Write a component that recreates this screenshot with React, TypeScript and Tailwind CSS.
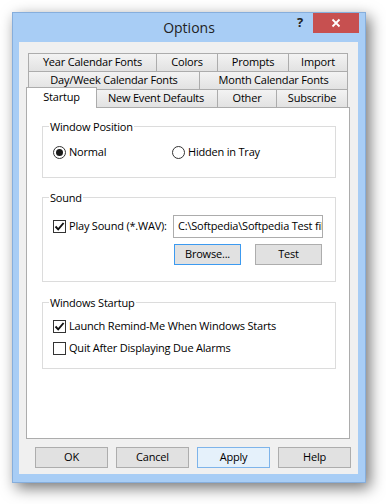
import React from "react";

function Check() {
  return (
    <svg width="11" height="11" viewBox="0 0 11 11">
      <path d="M1.5 5.5 L4.2 8.3 L9.6 2" fill="none" stroke="#111" strokeWidth="1.9" />
    </svg>
  );
}

function CheckBox({ checked }: { checked?: boolean }) {
  return (
    <span className="flex h-[13px] w-[13px] shrink-0 items-center justify-center border border-[#333] bg-white">
      {checked && <Check />}
    </span>
  );
}

function Radio({ checked }: { checked?: boolean }) {
  return (
    <span className="flex h-[13px] w-[13px] shrink-0 items-center justify-center rounded-full border border-[#333] bg-white">
      {checked && <span className="h-[7px] w-[7px] rounded-full bg-[#1a1a1a]" />}
    </span>
  );
}

function Tab({ label, className }: { label: string; className: string }) {
  return (
    <div
      className={`flex h-[18px] items-center justify-center border border-b-0 border-[#acacac] bg-gradient-to-b from-[#f3f3f3] to-[#e2e2e2] ${className}`}
    >
      {label}
    </div>
  );
}

function Group({ title, className, children }: { title: string; className: string; children: React.ReactNode }) {
  return (
    <div className={`ml-[15px] w-[294px] border border-[#dcdcdc] ${className}`}>
      <div className="-mt-[8px] ml-[6px] w-fit bg-white px-[1px] leading-[15px]">{title}</div>
      {children}
    </div>
  );
}

function Button({ label, className }: { label: string; className: string }) {
  return <div className={`flex h-[21px] items-center justify-center border ${className}`}>{label}</div>;
}

export default function App() {
  return (
    <div className="h-[504px] w-[386px] overflow-hidden bg-white pl-[12px] pt-[12px] font-['Open_Sans',sans-serif] text-[11px] tracking-[-0.2px] text-black">
      <div className="h-[471px] w-[354px] border border-[#86aedc] bg-[#a8cdf5] shadow-[4px_5px_14px_rgba(0,0,0,0.55)]">
        {/* title bar */}
        <div className="relative flex h-[29px] items-center justify-center">
          <span className="text-[14px] tracking-normal text-[#222]">Options</span>
          <div className="absolute right-[6px] top-0 flex">
            <span className="flex h-[20px] w-[26px] items-center justify-center text-[13px] font-bold text-[#222]">?</span>
            <span className="flex h-[20px] w-[46px] items-center justify-center bg-[#c75050]">
              <svg width="10" height="10" viewBox="0 0 10 10">
                <path d="M1.5 1.5 L8.5 8.5 M8.5 1.5 L1.5 8.5" stroke="#fff" strokeWidth="1.8" />
              </svg>
            </span>
          </div>
        </div>

        {/* client */}
        <div className="ml-[6px] h-[432px] w-[339px] bg-[#f0f0f0] pl-[7px] pt-[11px]">
          <div className="w-[324px]">
            <div className="ml-[2px] flex">
              <Tab label="Year Calendar Fonts" className="w-[129px]" />
              <Tab label="Colors" className="-ml-px w-[62px]" />
              <Tab label="Prompts" className="-ml-px w-[72px]" />
              <Tab label="Import" className="-ml-px w-[60px]" />
            </div>
            <div className="ml-[2px] flex">
              <Tab label="Day/Week Calendar Fonts" className="w-[172px]" />
              <Tab label="Month Calendar Fonts" className="-ml-px w-[149px]" />
            </div>
            <div className="relative z-10 -mb-px -mt-[2px] flex items-start">
              <div className="flex h-[21px] w-[71px] justify-center border border-b-0 border-[#acacac] bg-white pt-[1px]">
                Startup
              </div>
              <Tab label="New Event Defaults" className="relative -z-10 -ml-[3px] mt-[2px] w-[124px]" />
              <Tab label="Other" className="-ml-px mt-[2px] w-[60px]" />
              <Tab label="Subscribe" className="-ml-px mt-[2px] w-[72px]" />
            </div>

            {/* panel */}
            <div className="h-[332px] w-[324px] border border-[#acacac] bg-white pt-[18px]">
              <Group title="Window Position" className="h-[52px]">
                <div className="mt-[10px] flex h-[16px] items-center">
                  <div className="ml-[10px] flex w-[119px] items-center gap-[3px]">
                    <Radio checked />
                    <span>Normal</span>
                  </div>
                  <div className="flex items-center gap-[3px]">
                    <Radio />
                    <span>Hidden in Tray</span>
                  </div>
                </div>
              </Group>

              <Group title="Sound" className="mt-[19px] h-[85px]">
                <div className="mt-[10px] flex h-[23px] items-center">
                  <div className="ml-[10px] flex w-[120px] items-center gap-[3px]">
                    <CheckBox checked />
                    <span className="whitespace-nowrap">Play Sound (*.WAV):</span>
                  </div>
                  <div className="flex h-[23px] w-[150px] items-center overflow-hidden whitespace-nowrap border border-[#acacac] bg-white pl-[4px]">
                    C:\Softpedia\Softpedia Test files\sound.wav
                  </div>
                </div>
                <div className="ml-[131px] mt-[6px] flex gap-[14px]">
                  <Button label="Browse..." className="w-[67px] border-[#3c9af0] bg-[#e1e1e1]" />
                  <Button label="Test" className="w-[67px] border-[#adadad] bg-[#e1e1e1]" />
                </div>
              </Group>

              <Group title="Windows Startup" className="mt-[20px] h-[67px]">
                <div className="ml-[10px] mt-[8px] flex h-[16px] items-center gap-[3px]">
                  <CheckBox checked />
                  <span>Launch Remind-Me When Windows Starts</span>
                </div>
                <div className="ml-[10px] mt-[6px] flex h-[16px] items-center gap-[3px]">
                  <CheckBox />
                  <span>Quit After Displaying Due Alarms</span>
                </div>
              </Group>
            </div>
          </div>

          <div className="ml-[9px] mt-[8px] flex gap-[8px]">
            <Button label="OK" className="w-[73px] border-[#adadad] bg-[#e1e1e1]" />
            <Button label="Cancel" className="w-[73px] border-[#adadad] bg-[#e1e1e1]" />
            <Button label="Apply" className="w-[73px] border-[#7eb4ea] bg-[#e5f1fb]" />
            <Button label="Help" className="w-[73px] border-[#adadad] bg-[#e1e1e1]" />
          </div>
        </div>
      </div>
    </div>
  );
}
